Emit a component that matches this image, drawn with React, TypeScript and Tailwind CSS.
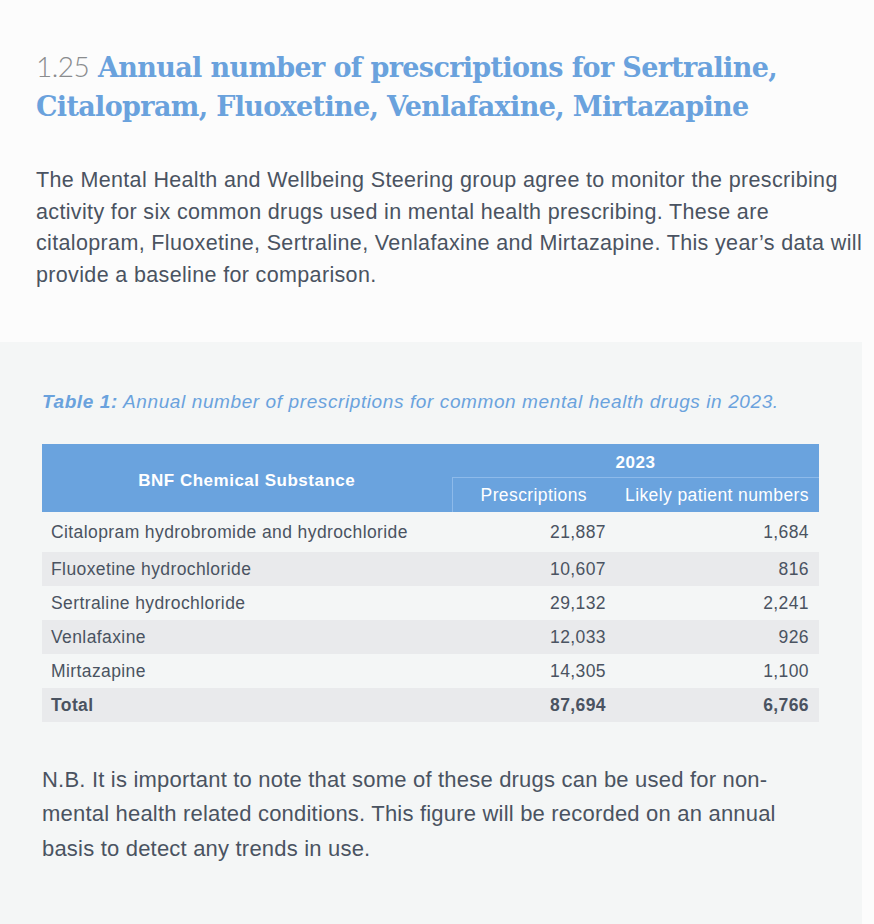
import React from "react";

const rows = [
  { name: "Citalopram hydrobromide and hydrochloride", rx: "21,887", pts: "1,684" },
  { name: "Fluoxetine hydrochloride", rx: "10,607", pts: "816" },
  { name: "Sertraline hydrochloride", rx: "29,132", pts: "2,241" },
  { name: "Venlafaxine", rx: "12,033", pts: "926" },
  { name: "Mirtazapine", rx: "14,305", pts: "1,100" },
];

export default function App() {
  return (
    <div className="min-h-[924px] w-[874px] bg-[#fcfcfc] font-['Liberation_Sans',Arial,sans-serif] text-[#4a5361]">
      <div className="pl-[36px] pr-[8px] pt-[47px] pb-[50px]">
        <h1 className="text-[27px] leading-[39px] font-['DejaVu_Serif',serif] font-bold tracking-[-0.65px] text-[#6aa2dd]">
          <span className="font-['Lato',sans-serif] text-[28px] font-light tracking-[-0.5px] text-[#8a8c8e]">1.25</span>{" "}
          Annual number of prescriptions for Sertraline,
          <br />
          Citalopram, Fluoxetine, Venlafaxine, Mirtazapine
        </h1>
        <p className="mt-[39px] text-[21.5px] leading-[31.7px] tracking-[0.35px]">
          The Mental Health and Wellbeing Steering group agree to monitor the prescribing activity for six
          common drugs used in mental health prescribing. These are citalopram, Fluoxetine, Sertraline,
          Venlafaxine and Mirtazapine. This year’s data will provide a baseline for comparison.
        </p>
      </div>

      <div className="mr-[12px] min-h-[584px] bg-[#f4f6f6] px-[42px] pt-[46px] pb-[40px]">
        <p className="text-[19px] leading-[28px] tracking-[0.6px] italic text-[#6aa2dd]">
          <span className="font-bold">Table 1:</span> Annual number of prescriptions for common mental
          health drugs in 2023.
        </p>

        <table className="mt-[28px] w-[777px] border-collapse text-[17.5px] tracking-[0.4px]">
          <colgroup>
            <col className="w-[410px]" />
            <col className="w-[163px]" />
            <col className="w-[204px]" />
          </colgroup>
          <thead className="bg-[#6aa3de] text-white">
            <tr className="h-[34px]">
              <th rowSpan={2} className="pt-[6px] text-center text-[17px] font-bold tracking-[0.5px]">
                BNF Chemical Substance
              </th>
              <th colSpan={2} className="pt-[4px] text-center text-[17px] font-bold tracking-[0.5px]">
                2023
              </th>
            </tr>
            <tr className="h-[34px]">
              <th className="border-t border-l border-[#8dbaea] text-center font-normal">Prescriptions</th>
              <th className="border-t border-[#8dbaea] text-center font-normal">Likely patient numbers</th>
            </tr>
          </thead>
          <tbody>
            {rows.map((r, i) => (
              <tr key={r.name} className={i % 2 === 1 ? "h-[34px] bg-[#e9eaec]" : i === 0 ? "h-[40px]" : "h-[34px]"}>
                <td className="pl-[9px]">{r.name}</td>
                <td className="pr-[9px] text-right">{r.rx}</td>
                <td className="pr-[10px] text-right">{r.pts}</td>
              </tr>
            ))}
            <tr className="h-[34px] bg-[#e9eaec] font-bold">
              <td className="pl-[9px]">Total</td>
              <td className="pr-[9px] text-right">87,694</td>
              <td className="pr-[10px] text-right">6,766</td>
            </tr>
          </tbody>
        </table>

        <p className="mt-[41px] w-[780px] text-[22px] leading-[34.5px] tracking-[0.2px]">
          N.B. It is important to note that some of these drugs can be used for non-mental health related
          conditions. This figure will be recorded on an annual basis to detect any trends in use.
        </p>
      </div>
    </div>
  );
}
